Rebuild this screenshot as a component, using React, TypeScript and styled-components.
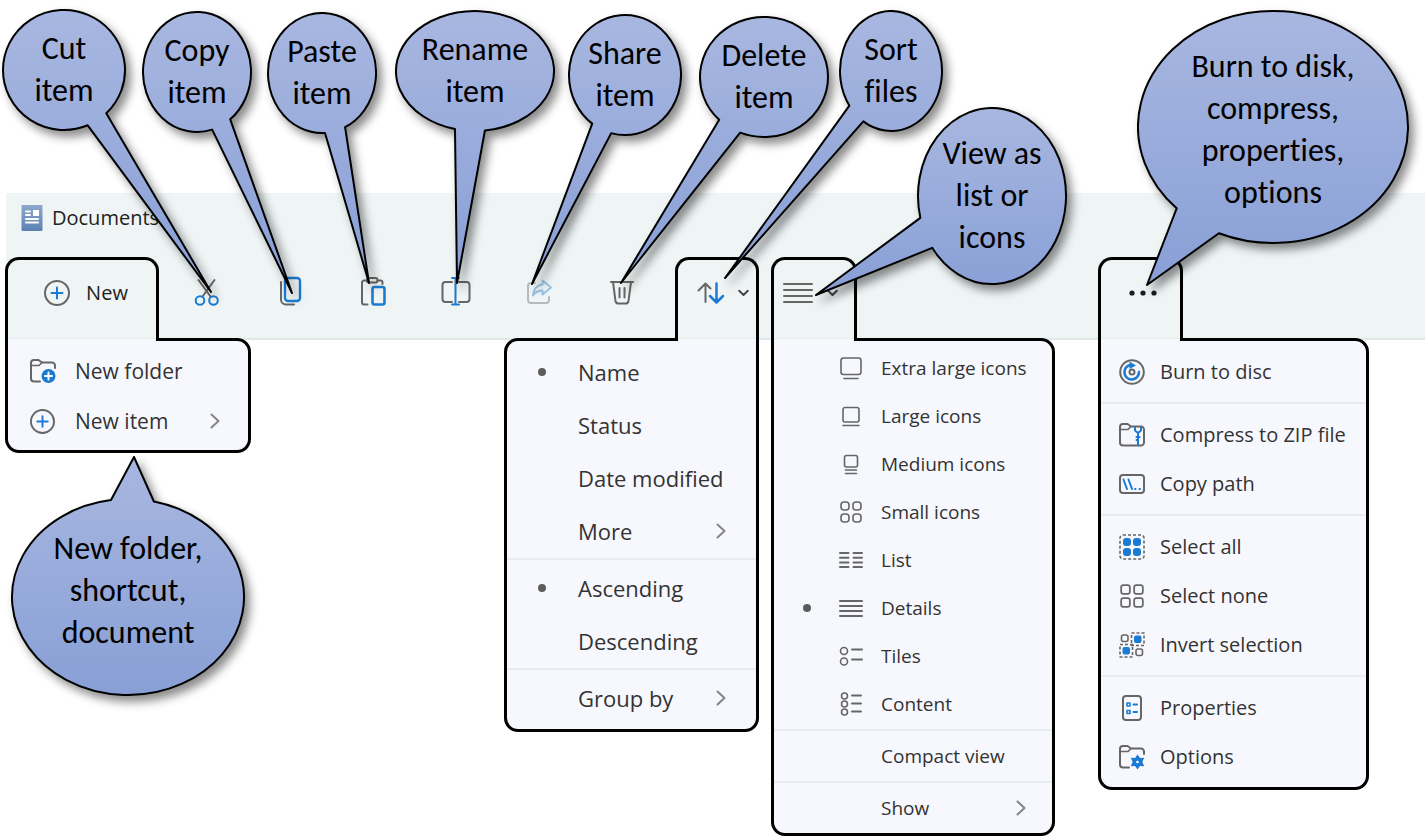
import React from "react";
import styled, { createGlobalStyle, css } from "styled-components";

const GRAY = "#666666";
const BLUE = "#1b7bd3";
const PANEL = "#f7f8fd";
const BAR = "#eff5f5";
const INK = "#000000";

const GlobalStyle = createGlobalStyle`
  * { box-sizing: border-box; }
  body {
    margin: 0;
    background: #ffffff;
    font-family: "Open Sans", "Noto Sans", sans-serif;
    color: #333333;
  }
  button { font: inherit; color: inherit; }
`;

/* ---------- page and command bar ---------- */

const Page = styled.main`
  position: relative;
  min-height: 100vh;
  padding: 193px 0 0 5px;
  overflow: hidden;
`;

const Explorer = styled.section`
  background: linear-gradient(to right, #ffffff 1px, ${BAR} 1px);
  border-bottom: 2px solid #e2e7e7;
`;

const TitleBar = styled.header`
  display: flex;
  align-items: center;
  gap: 9px;
  height: 49px;
  margin-bottom: 15px;
  padding-left: 16px;
  color: #222222;
`;

const Title = styled.h1`
  margin: 0;
  font-size: 20px;
  font-weight: 400;
  line-height: 28px;
`;

const Toolbar = styled.nav`
  display: flex;
  height: 81px;
`;

const ToolGroup = styled.div`
  display: flex;
  margin: 0 12px 0 6px;
`;

const ToolButton = styled.button<{ $faded?: boolean }>`
  display: flex;
  align-items: center;
  justify-content: center;
  width: 83px;
  padding: 0 0 11px;
  border: 0;
  background: none;
  opacity: ${(p) => (p.$faded ? 0.4 : 1)};
`;

const TabSlot = styled.div<{ $width: number; $before?: number }>`
  position: relative;
  flex: none;
  width: ${(p) => p.$width}px;
  margin-left: ${(p) => p.$before ?? 0}px;
`;

const Tab = styled.button<{ $gap: number; $pad: string }>`
  position: relative;
  z-index: 2;
  display: flex;
  align-items: center;
  justify-content: center;
  gap: ${(p) => p.$gap}px;
  width: 100%;
  height: 100%;
  padding: ${(p) => p.$pad};
  border: 3px solid ${INK};
  border-bottom: 0;
  border-radius: 14px 14px 0 0;
  background: ${BAR};
  font-size: 20px;
  line-height: 28px;
  color: #222222;

  &::after {
    content: "";
    position: absolute;
    top: 100%;
    left: -3px;
    right: -3px;
    height: 3px;
    border: solid ${INK};
    border-width: 0 3px;
    background: ${PANEL};
    box-shadow: inset 0 1px #e6ebec;
  }
`;

/* ---------- drop-down menus ---------- */

type MenuLook = {
  $width: number;
  $align: "left" | "right";
  $font: number;
  $row: number;
  $columns: string;
  $pad: string;
  $inset: string;
  $rule: number;
};

const Menu = styled.div<MenuLook>`
  position: absolute;
  top: 100%;
  z-index: 1;
  width: ${(p) => p.$width}px;
  padding: ${(p) => p.$pad};
  border: 3px solid ${INK};
  background: ${PANEL};
  font-size: ${(p) => p.$font}px;
  ${(p) =>
    p.$align === "left"
      ? css`
          left: 0;
          border-radius: 0 14px 14px 14px;
        `
      : css`
          right: 0;
          border-radius: 14px 0 14px 14px;
        `}

  & > button {
    grid-template-columns: ${(p) => p.$columns};
    height: ${(p) => p.$row}px;
    padding: ${(p) => p.$inset};
  }
  & > hr {
    margin: ${(p) => p.$rule}px 0;
  }
`;

const Item = styled.button`
  display: grid;
  align-items: center;
  width: 100%;
  border: 0;
  background: none;
  text-align: left;
  white-space: nowrap;
`;

const Rule = styled.hr`
  height: 2px;
  border: 0;
  background: #e8ebef;
`;

const Bullet = styled.span<{ $on?: boolean }>`
  width: 8px;
  height: 8px;
  border-radius: 50%;
  background: ${(p) => (p.$on ? "#5c5c5c" : "transparent")};
`;

/* ---------- icons ---------- */

const Svg = styled.svg`
  display: block;
  flex: none;
  fill: none;
  stroke: ${GRAY};
  stroke-width: 2;
  stroke-linecap: round;
  stroke-linejoin: round;
  overflow: visible;

  .blue { stroke: ${BLUE}; }
  .solid { fill: ${BLUE}; stroke: none; }
  .dash { stroke-dasharray: 3 2; stroke-width: 1.6; stroke-linecap: butt; }
  .thin { stroke-width: 1.6; }
`;

const Glyph = ({ w, h, children }: { w: number; h: number; children: React.ReactNode }) => (
  <Svg width={w} height={h} viewBox={`0 0 ${w} ${h}`} aria-hidden="true">
    {children}
  </Svg>
);

const Chevron = () => (
  <Glyph w={10} h={16}>
    <path d="M1.5 1.5 8.5 8l-7 6.5" stroke="#858585" />
  </Glyph>
);

const ChevronDown = () => (
  <Glyph w={11} h={8}>
    <path d="M1.2 1.8 5.5 6l4.3-4.2" stroke="#444444" />
  </Glyph>
);

const PlusCircle = ({ size }: { size: number }) => (
  <Svg width={size} height={size} viewBox="0 0 26 26" aria-hidden="true">
    <circle cx="13" cy="13" r="12" />
    <path className="blue" d="M13 7.5v11M7.5 13h11" />
  </Svg>
);

const DocumentIcon = () => (
  <Svg width="22" height="28" viewBox="0 0 22 28" aria-hidden="true">
    <defs>
      <linearGradient id="doc" x1="0" y1="0" x2="0" y2="1">
        <stop offset="0" stopColor="#8ba9cc" />
        <stop offset="1" stopColor="#5b82b4" />
      </linearGradient>
    </defs>
    <rect x="0.5" y="1" width="21" height="26" rx="1" fill="url(#doc)" stroke="none" />
    <path d="M5 7.5h4M5 11h4M5 15h12M5 18.5h12" stroke="#ffffff" />
    <rect x="12" y="6" width="6" height="6" fill="#ffffff" stroke="none" />
  </Svg>
);

const CutIcon = () => (
  <Glyph w={29} h={28}>
    <path d="M10.5 18.5 22.5 2M18.5 18.5 6.5 2" />
    <circle className="blue" cx="8" cy="22.5" r="4.3" />
    <circle className="blue" cx="21.5" cy="22.5" r="4.3" />
  </Glyph>
);

const CopyIcon = () => (
  <Glyph w={29} h={28}>
    <path d="M6 4v17.5a5 5 0 0 0 5 5h8" />
    <rect className="blue" x="10" y="0" width="15" height="23" rx="3" strokeWidth="2.4" />
  </Glyph>
);

const PasteIcon = () => (
  <Glyph w={29} h={28}>
    <path d="M9.5 26.5H6a2 2 0 0 1-2-2v-20a2 2 0 0 1 2-2h3M19.5 2.5h3a2 2 0 0 1 2 2V6" />
    <rect x="9" y="0" width="10.5" height="4.5" rx="2" />
    <rect className="blue" x="14.5" y="9" width="12" height="17.5" rx="2" strokeWidth="2.6" />
  </Glyph>
);

const RenameIcon = () => (
  <Glyph w={29} h={28}>
    <path d="M11 24H4.5a3 3 0 0 1-3-3V7a3 3 0 0 1 3-3H11M18 4h7.5a3 3 0 0 1 3 3v14a3 3 0 0 1-3 3H18" />
    <path className="blue" d="M14.500 0v26.500M11 0h7M11 26.500h7" />
  </Glyph>
);

const ShareIcon = () => (
  <Glyph w={29} h={28}>
    <path d="M11 5H7a3 3 0 0 0-3 3v14a3 3 0 0 0 3 3h15a3 3 0 0 0 3-3v-3" />
    <path
      className="blue"
      d="M18.5 2.500 27 9.500l-8.500 7v-4c-4.500 0-7 1.500-9.500 5 .5-6 4-10.500 9.500-11z"
    />
  </Glyph>
);

const TrashIcon = () => (
  <Glyph w={29} h={28}>
    <path d="M4 4h22M6 4l2.500 19a3 3 0 0 0 3 2.500h7a3 3 0 0 0 3-2.500L24 4M12.500 10v9.500M17.500 10v9.500" />
  </Glyph>
);

const SortIcon = () => (
  <Glyph w={27} h={22}>
    <path d="M8.5 20V1.500M1.500 8.500l7-7 5 5" />
    <path className="blue" d="M19.500 1.500V20M13 14l6.500 6.500L26 14" strokeWidth="2.500" />
  </Glyph>
);

const LinesIcon = ({ w, gap }: { w: number; gap: number }) => (
  <Glyph w={w} h={gap * 3 + 2}>
    {[0, 1, 2, 3].map((i) => (
      <path key={i} d={`M1 ${1 + i * gap}H${w - 1}`} />
    ))}
  </Glyph>
);

const DotsIcon = () => (
  <Glyph w={28} h={6}>
    {[3, 14, 25].map((x) => (
      <circle key={x} cx={x} cy="3" r="2.600" fill="#1c1c1c" stroke="none" />
    ))}
  </Glyph>
);

const FolderBody = ({ d }: { d: string }) => (
  <>
    <path d={d} />
    <path d="M1 7.500h8l3-3" className="thin" />
  </>
);

const NewFolderIcon = () => (
  <Glyph w={26} h={26}>
    <FolderBody d="M10 23.500H4a3 3 0 0 1-3-3V5a3 3 0 0 1 3-3h4.500L12 4.500h10a3 3 0 0 1 3 3V10" />
    <circle className="solid" cx="18.500" cy="18" r="7" />
    <path d="M18.500 14.500v7M15 18h7" stroke="#ffffff" />
  </Glyph>
);

const Monitor = ({ size }: { size: "xl" | "l" | "m" }) => (
  <Glyph w={24} h={24}>
    {size === "xl" && <path d="M4.500 2h15A2.500 2.500 0 0 1 22 4.500V16a2.500 2.500 0 0 1-2.500 2.500h-15A2.500 2.500 0 0 1 2 16V4.500A2.500 2.500 0 0 1 4.500 2zM5 22.500h14" className="thin" />}
    {size === "l" && <path d="M6 3.500h12a2 2 0 0 1 2 2V16a2 2 0 0 1-2 2H6a2 2 0 0 1-2-2V5.500a2 2 0 0 1 2-2zM4 21.500h16" className="thin" />}
    {size === "m" && <path d="M7.500 3.500h9a2 2 0 0 1 2 2V13a2 2 0 0 1-2 2h-9a2 2 0 0 1-2-2V5.500a2 2 0 0 1 2-2zM6.500 18h11M6.500 21.500h11" className="thin" />}
  </Glyph>
);

const FourSquares = ({ w, round }: { w: number; round: number }) => (
  <Svg width={w} height={w} viewBox="0 0 24 24" aria-hidden="true">
    {[
      [2, 2],
      [14, 2],
      [2, 14],
      [14, 14],
    ].map(([x, y]) => (
      <rect key={`${x}-${y}`} x={x} y={y} width="8" height="8" rx={round} className="thin" />
    ))}
  </Svg>
);

const ListIcon = () => (
  <Glyph w={24} h={24}>
    {[5, 9.7, 14.4, 19.1].map((y) => (
      <path key={y} d={`M1 ${y}h8.500M14.500 ${y}H23`} />
    ))}
  </Glyph>
);

const TilesIcon = () => (
  <Glyph w={24} h={24}>
    <circle cx="5" cy="7" r="3.500" className="thin" />
    <circle cx="5" cy="17.500" r="3.500" className="thin" />
    <path d="M13 5.500h10M13 15.500h10" />
  </Glyph>
);

const ContentIcon = () => (
  <Glyph w={24} h={24}>
    {[4, 12, 20].map((y) => (
      <React.Fragment key={y}>
        <circle cx="5.500" cy={y} r="3" className="thin" />
        <path d={`M13 ${y - 0.5}h9`} />
      </React.Fragment>
    ))}
  </Glyph>
);

const DiscIcon = () => (
  <Glyph w={26} h={26}>
    <circle cx="13" cy="13" r="11.800" />
    <circle cx="13" cy="13" r="2.500" />
    <path className="blue" d="M20 13a7.300 7.300 0 1 1-8-7.100" strokeWidth="2.600" />
    <path className="solid" d="M10.500 2.500 17 6.500l-6.500 3.500z" />
  </Glyph>
);

const ZipIcon = () => (
  <Glyph w={26} h={26}>
    <FolderBody d="M4 2h4.500L12 4.500h10a3 3 0 0 1 3 3v13a3 3 0 0 1-3 3H4a3 3 0 0 1-3-3V5a3 3 0 0 1 3-3z" />
    <path className="blue" d="M16 5.500v3l3 2.500 3-2.500v-3M19 11v4M17.500 15h3M19 18h-1.500M19 15v8" />
  </Glyph>
);

const PathIcon = () => (
  <Glyph w={26} h={26}>
    <rect x="1" y="4" width="24" height="18" rx="3" />
    <path className="blue" d="M4.500 8.500 8 18M9.500 8.500 13 18M16 18h.5M20.500 18h.5" />
  </Glyph>
);

const SelectAllIcon = () => (
  <Glyph w={26} h={26}>
    <rect className="dash" x="1" y="1" width="24" height="24" rx="3" />
    {[
      [4, 4],
      [14, 4],
      [4, 14],
      [14, 14],
    ].map(([x, y]) => (
      <rect key={`${x}-${y}`} className="solid" x={x} y={y} width="8" height="8" rx="3" />
    ))}
  </Glyph>
);

const InvertIcon = () => (
  <Glyph w={26} h={26}>
    <rect className="thin" x="2.500" y="3" width="6.500" height="6.500" rx="2" />
    <rect className="thin" x="17" y="17" width="6.500" height="6.500" rx="2" />
    <rect className="dash" x="12.500" y="1" width="12.500" height="12.500" />
    <rect className="dash" x="1" y="12.500" width="12.500" height="12.500" />
    <rect className="solid" x="15" y="3.500" width="7.500" height="7.500" rx="2" />
    <rect className="solid" x="3.500" y="15" width="7.500" height="7.500" rx="2" />
  </Glyph>
);

const PropertiesIcon = () => (
  <Glyph w={26} h={26}>
    <rect x="4" y="1" width="18" height="24" rx="3" />
    <rect className="blue thin" x="8" y="8" width="3" height="3" />
    <rect className="blue thin" x="8" y="15.500" width="3" height="3" />
    <path className="blue" d="M14.500 9.500H18M14.500 17H18" />
  </Glyph>
);

const OptionsIcon = () => (
  <Glyph w={26} h={26}>
    <FolderBody d="M10 23.500H4a3 3 0 0 1-3-3V5a3 3 0 0 1 3-3h4.500L12 4.500h10a3 3 0 0 1 3 3V10" />
    <path
      className="solid"
      d="m18.500 10.500 2.500 3.500 4.200-.2-1.800 4.200 1.800 4.200-4.200-.2-2.500 3.500-2.500-3.500-4.200.2 1.800-4.200-1.800-4.200 4.200.2z"
    />
    <circle cx="18.500" cy="18" r="1.300" fill="#ffffff" stroke="none" />
  </Glyph>
);

/* ---------- callouts ---------- */

type Point = [number, number];

type CalloutData = {
  lines: string[];
  center: Point;
  radius: Point;
  /** The body is drawn clockwise between these two points, then out to the tip. */
  from: Point;
  to: Point;
  tip: Point;
  above?: number;
  below?: number;
};

const Bubble = styled.aside<{ $center: Point; $radius: Point; $above: number; $below: number }>`
  position: absolute;
  z-index: 5;
  left: ${(p) => p.$center[0] - p.$radius[0]}px;
  top: ${(p) => p.$center[1] - p.$radius[1]}px;
  width: ${(p) => p.$radius[0] * 2}px;
  height: ${(p) => p.$radius[1] * 2}px;
  padding: ${(p) => p.$above}px 0 ${(p) => p.$below}px;
  display: flex;
  align-items: center;
  justify-content: center;
  pointer-events: none;
`;

const BubbleShape = styled.svg`
  position: absolute;
  inset: 0;
  width: 100%;
  height: 100%;
  overflow: visible;
  filter: drop-shadow(5px 6px 5px rgba(0, 0, 0, 0.45));
`;

const BubbleText = styled.p`
  position: relative;
  margin: 0;
  font-family: Carlito, Lato, sans-serif;
  font-size: 32px;
  font-variant-ligatures: none;
  line-height: 42px;
  text-align: center;
  white-space: pre;
  color: ${INK};
`;

const callouts: CalloutData[] = [
  { lines: ["Cut", "item"], center: [64, 70], radius: [61, 60], from: [88, 126], to: [107, 114], tip: [211, 292] },
  { lines: ["Copy", "item"], center: [197, 72], radius: [54, 60], from: [212, 129], to: [230, 119], tip: [292, 293] },
  { lines: ["Paste", "item"], center: [322, 73], radius: [54, 60], from: [325, 133], to: [345, 127], tip: [369, 283] },
  { lines: ["Rename", "item"], center: [475, 71], radius: [79, 60], from: [455, 129], to: [485, 131], tip: [457, 283] },
  { lines: ["Share", "item"], center: [625, 75], radius: [56, 60], from: [592, 124], to: [611, 134], tip: [532, 284] },
  { lines: ["Delete", "item"], center: [764, 77], radius: [64, 60], from: [719, 120], to: [740, 133], tip: [621, 283] },
  { lines: ["Sort", "files"], center: [891, 71], radius: [51, 60], from: [849, 106], to: [863, 122], tip: [725, 278] },
  { lines: ["View as", "list or", "icons"], center: [992, 196], radius: [74, 88], from: [920, 218], to: [932, 248], tip: [816, 295] },
  { lines: ["Burn to disk,", "compress,", "properties,", "options"], center: [1273, 127], radius: [135, 116], from: [1177, 208], to: [1219, 233], tip: [1147, 285], above: 6 },
  { lines: ["New folder,", "shortcut,", "document"], center: [128, 597], radius: [116, 98], from: [154, 501], to: [111, 500], tip: [134, 457], below: 12 },
];

const Callout = ({ data, id }: { data: CalloutData; id: string }) => {
  const { center, radius, from, to, tip, lines, above = 0, below = 0 } = data;
  const [rx, ry] = radius;
  const onEdge = ([x, y]: Point) => {
    const a = Math.atan2((y - center[1]) / ry, (x - center[0]) / rx);
    return `${rx + rx * Math.cos(a)} ${ry + ry * Math.sin(a)}`;
  };
  const tipAt = `${tip[0] - center[0] + rx} ${tip[1] - center[1] + ry}`;
  return (
    <Bubble $center={center} $radius={radius} $above={above} $below={below}>
      <BubbleShape aria-hidden="true">
        <defs>
          <linearGradient id={id} x1="0" y1="0" x2="0" y2="1">
            <stop offset="0" stopColor="#a8b7e0" />
            <stop offset="1" stopColor="#889fd6" />
          </linearGradient>
        </defs>
        <path
          d={`M${onEdge(from)}A${rx} ${ry} 0 1 1 ${onEdge(to)}L${tipAt}Z`}
          fill={`url(#${id})`}
          stroke={INK}
          strokeWidth="2"
          strokeLinejoin="round"
        />
      </BubbleShape>
      <BubbleText>{lines.join("\n")}</BubbleText>
    </Bubble>
  );
};

/* ---------- content ---------- */

const tools = [
  { label: "Cut", icon: <CutIcon /> },
  { label: "Copy", icon: <CopyIcon /> },
  { label: "Paste", icon: <PasteIcon /> },
  { label: "Rename", icon: <RenameIcon /> },
  { label: "Share", icon: <ShareIcon />, faded: true },
  { label: "Delete", icon: <TrashIcon /> },
];

type Entry = { text: string; icon?: React.ReactNode; on?: boolean; more?: boolean };

const newItems: Entry[] = [
  { text: "New folder", icon: <NewFolderIcon /> },
  { text: "New item", icon: <PlusCircle size={25} />, more: true },
];

const sortItems: Entry[][] = [
  [{ text: "Name", on: true }, { text: "Status" }, { text: "Date modified" }, { text: "More", more: true }],
  [{ text: "Ascending", on: true }, { text: "Descending" }],
  [{ text: "Group by", more: true }],
];

const viewItems: Entry[][] = [
  [
    { text: "Extra large icons", icon: <Monitor size="xl" /> },
    { text: "Large icons", icon: <Monitor size="l" /> },
    { text: "Medium icons", icon: <Monitor size="m" /> },
    { text: "Small icons", icon: <FourSquares w={24} round={3} /> },
    { text: "List", icon: <ListIcon /> },
    { text: "Details", icon: <LinesIcon w={24} gap={5} />, on: true },
    { text: "Tiles", icon: <TilesIcon /> },
    { text: "Content", icon: <ContentIcon /> },
  ],
  [{ text: "Compact view" }],
  [{ text: "Show", more: true }],
];

const moreItems: Entry[][] = [
  [{ text: "Burn to disc", icon: <DiscIcon /> }],
  [
    { text: "Compress to ZIP file", icon: <ZipIcon /> },
    { text: "Copy path", icon: <PathIcon /> },
  ],
  [
    { text: "Select all", icon: <SelectAllIcon /> },
    { text: "Select none", icon: <FourSquares w={26} round={2} /> },
    { text: "Invert selection", icon: <InvertIcon /> },
  ],
  [
    { text: "Properties", icon: <PropertiesIcon /> },
    { text: "Options", icon: <OptionsIcon /> },
  ],
];

const MenuPanel = ({
  groups,
  bullets,
  icons,
  ...look
}: MenuLook & { groups: Entry[][]; bullets?: boolean; icons?: boolean }) => (
  <Menu {...look}>
    {groups.map((group, g) => (
      <React.Fragment key={g}>
        {g > 0 && <Rule />}
        {group.map((entry) => (
          <Item key={entry.text}>
            {bullets && <Bullet $on={entry.on} />}
            {icons && (entry.icon ?? <span />)}
            <span>{entry.text}</span>
            {entry.more && <Chevron />}
          </Item>
        ))}
      </React.Fragment>
    ))}
  </Menu>
);

export default function App() {
  return (
    <Page>
      <GlobalStyle />
      <Explorer>
        <TitleBar>
          <DocumentIcon />
          <Title>Documents</Title>
        </TitleBar>
        <Toolbar>
          <TabSlot $width={154}>
            <Tab $gap={16} $pad="0 0 12px 8px">
              <PlusCircle size={26} />
              New
            </Tab>
            <MenuPanel
              groups={[newItems]}
              icons
              $width={246}
              $align="left"
              $font={21}
              $row={50}
              $columns="45px 1fr 10px"
              $pad="5px 0 4px"
              $inset="0 28px 0 22px"
              $rule={0}
            />
          </TabSlot>
          <ToolGroup>
            {tools.map((tool) => (
              <ToolButton key={tool.label} aria-label={tool.label} $faded={tool.faded}>
                {tool.icon}
              </ToolButton>
            ))}
          </ToolGroup>
          <TabSlot $width={84}>
            <Tab $gap={14} $pad="0 0 12px 12px" aria-label="Sort">
              <SortIcon />
              <ChevronDown />
            </Tab>
            <MenuPanel
              groups={sortItems}
              bullets
              $width={255}
              $align="right"
              $font={22}
              $row={53}
              $columns="40px 1fr 10px"
              $pad="4px 0 5px"
              $inset="0 30px 0 31px"
              $rule={1}
            />
          </TabSlot>
          <TabSlot $width={86} $before={12}>
            <Tab $gap={14} $pad="0 8px 12px 0" aria-label="View">
              <LinesIcon w={30} gap={6} />
              <ChevronDown />
            </Tab>
            <MenuPanel
              groups={viewItems}
              bullets
              icons
              $width={284}
              $align="left"
              $font={19}
              $row={48}
              $columns="36px 42px 1fr 10px"
              $pad="3px 0 1px"
              $inset="0 26px 0 29px"
              $rule={1}
            />
          </TabSlot>
          <TabSlot $width={85} $before={241}>
            <Tab $gap={0} $pad="0 0 12px 4px" aria-label="See more">
              <DotsIcon />
            </Tab>
            <MenuPanel
              groups={moreItems}
              icons
              $width={271}
              $align="left"
              $font={20}
              $row={49}
              $columns="41px 1fr"
              $pad="6px 0"
              $inset="0 0 0 18px"
              $rule={6}
            />
          </TabSlot>
        </Toolbar>
      </Explorer>
      {callouts.map((data, i) => (
        <Callout key={data.lines[0]} data={data} id={`bubble-${i}`} />
      ))}
    </Page>
  );
}
